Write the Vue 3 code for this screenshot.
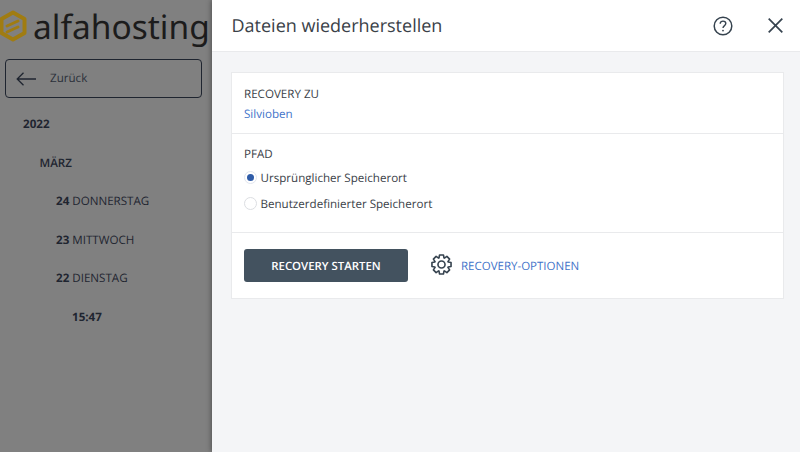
<script setup>
const tree = [
  { id: 'y', level: 0, bold: '2022', text: '' },
  { id: 'm', level: 1, bold: '', text: 'MÄRZ', medium: true },
  { id: 'd24', level: 2, bold: '24', text: 'DONNERSTAG' },
  { id: 'd23', level: 2, bold: '23', text: 'MITTWOCH' },
  { id: 'd22', level: 2, bold: '22', text: 'DIENSTAG' },
  { id: 't', level: 3, bold: '15:47', text: '' }
]

// eight blocky teeth around the centre
function gearPath() {
  const pts = []
  for (let i = 0; i < 8; i++) {
    const a = (i * Math.PI) / 4
    for (const [r, off] of [[7.4, -0.36], [10.2, -0.2], [10.2, 0.2], [7.4, 0.36]]) {
      const x = 11 + r * Math.sin(a + off)
      const y = 11 - r * Math.cos(a + off)
      pts.push(`${x.toFixed(2)} ${y.toFixed(2)}`)
    }
  }
  return `M${pts.join(' L')} Z`
}
const gear = gearPath()
</script>

<template>
  <div class="page">
    <aside class="side">
      <div class="logo">
        <svg class="logo-mark" viewBox="0 0 28 32" width="28" height="32">
          <path d="M13 2.5 L24.5 9 V23 L13 29.5 L1.5 23 V9 Z" fill="none" stroke="#a07c12" stroke-width="4" stroke-linejoin="round" />
          <path d="M7 16 L18 11 M7 22 L18 17" fill="none" stroke="#a07c12" stroke-width="3" stroke-linecap="round" />
        </svg>
        <span class="logo-text">alfahosting</span>
      </div>
      <button class="back">
        <svg viewBox="0 0 20 14" width="20" height="14">
          <path d="M20 7 H1.2 M7.5 0.7 L1.2 7 L7.5 13.3" fill="none" stroke="#1f2530" stroke-width="1.3" />
        </svg>
        <span>Zurück</span>
      </button>
      <ul class="tree">
        <li v-for="item in tree" :key="item.id" :class="['tree-row', `lv${item.level}`, { medium: item.medium }]">
          <b v-if="item.bold">{{ item.bold }}</b>
          <span v-if="item.text">{{ item.text }}</span>
        </li>
      </ul>
    </aside>

    <section class="panel">
      <header class="panel-head">
        <h1>Dateien wiederherstellen</h1>
        <svg class="help" viewBox="0 0 20 20" width="20" height="20">
          <circle cx="10" cy="10" r="8.8" fill="none" stroke="#36434f" stroke-width="1.5" />
          <path d="M7.2 7.8 C7.2 6 8.5 5.1 10 5.1 C11.6 5.1 12.8 6.1 12.8 7.6 C12.8 9.6 10 9.6 10 11.9" fill="none" stroke="#36434f" stroke-width="1.4" />
          <circle cx="10" cy="14.6" r="0.9" fill="#36434f" />
        </svg>
        <svg class="close" viewBox="0 0 15 15" width="15" height="15">
          <path d="M0.7 0.7 L14.3 14.3 M14.3 0.7 L0.7 14.3" fill="none" stroke="#36434f" stroke-width="1.7" />
        </svg>
      </header>

      <div class="panel-body">
        <div class="card">
          <div class="block block-target">
            <div class="label">RECOVERY ZU</div>
            <a class="link">Silvioben</a>
          </div>
          <div class="block block-path">
            <div class="label">PFAD</div>
            <label class="radio">
              <span class="dot on"></span>
              Ursprünglicher Speicherort
            </label>
            <label class="radio">
              <span class="dot"></span>
              Benutzerdefinierter Speicherort
            </label>
          </div>
          <div class="block block-actions">
            <button class="start">RECOVERY STARTEN</button>
            <svg class="gear" viewBox="0 0 22 22" width="21" height="21">
              <path :d="gear" fill="none" stroke="#36434f" stroke-width="1.7" stroke-linejoin="round" />
              <circle cx="11" cy="11" r="3.7" fill="none" stroke="#36434f" stroke-width="1.7" />
            </svg>
            <a class="link upper">RECOVERY-OPTIONEN</a>
          </div>
        </div>
      </div>
    </section>
  </div>
</template>

<style scoped>
.page {
  display: flex;
  width: 800px;
  height: 452px;
  overflow: hidden;
  font-family: "Open Sans", "Liberation Sans", sans-serif;
  color: #3a4148;
  text-rendering: geometricPrecision;
}

.side {
  width: 212px;
  flex: none;
  background: #808080;
  color: #1f2530;
}

.logo {
  display: flex;
  align-items: center;
  height: 52px;
  gap: 5px;
}

.logo-mark {
  flex: none;
}

.logo-text {
  font-family: "Noto Sans", sans-serif;
  font-size: 33.5px;
  line-height: 52px;
  color: #1c1c1c;
  white-space: nowrap;
}

.back {
  display: flex;
  align-items: center;
  gap: 14px;
  box-sizing: border-box;
  width: 197px;
  height: 39px;
  margin: 7px 0 0 5px;
  padding: 0 0 0 10px;
  background: transparent;
  border: 1.5px solid #1f2530;
  border-radius: 4px;
  font: 11.6px "Open Sans", sans-serif;
  text-rendering: geometricPrecision;
  color: #2b303a;
}

.tree {
  list-style: none;
  margin: 8px 0 0;
  padding: 0;
}

.tree-row {
  height: 38.6px;
  line-height: 38.6px;
  font-size: 11.6px;
  white-space: nowrap;
}

.tree-row b {
  font-weight: 700;
  margin-right: 3px;
}

.tree-row.medium {
  font-weight: 600;
}

.lv0 { padding-left: 23px; }
.lv1 { padding-left: 39.5px; }
.lv2 { padding-left: 56px; }
.lv3 { padding-left: 72px; }

.panel {
  flex: 1;
  display: flex;
  flex-direction: column;
  background: #f4f5f7;
  box-shadow: -1px 0 5px rgba(0, 0, 0, 0.35);
  position: relative;
}

.panel-head {
  display: flex;
  align-items: center;
  height: 52px;
  box-sizing: border-box;
  padding: 0 17px 0 19.5px;
  background: #fff;
  border-bottom: 1px solid #e9eaec;
}

.panel-head h1 {
  flex: 1;
  margin: 0;
  font-size: 18px;
  font-weight: 400;
  color: #3a4148;
}

.help {
  margin-right: 35px;
}

.panel-body {
  padding: 20px 16px 0 19px;
}

.card {
  background: #fff;
  border: 1px solid #e9eaec;
}

.block {
  padding: 0 12px;
}

.block + .block {
  border-top: 1px solid #e9eaec;
}

.block-target {
  height: 60px;
  padding-top: 12px;
  box-sizing: border-box;
}

.block-path {
  height: 99px;
  padding-top: 11px;
  box-sizing: border-box;
}

.block-actions {
  display: flex;
  align-items: center;
  height: 66px;
  box-sizing: border-box;
}

.label {
  font-size: 11.6px;
  line-height: 20px;
  color: #3a4148;
}

.link {
  font-size: 11.6px;
  line-height: 20px;
  color: #3f73c9;
}

.block-target .link {
  display: block;
}

.radio {
  display: flex;
  align-items: center;
  gap: 3.5px;
  height: 26px;
  font-size: 11.6px;
  color: #3a4148;
}

.dot {
  width: 13px;
  height: 13px;
  box-sizing: border-box;
  border-radius: 50%;
  border: 1px solid #dcdee2;
  background: #fff;
  margin-top: -2px;
  position: relative;
}

.dot.on {
  border-color: #e2e6ee;
}

.dot.on::after {
  content: "";
  position: absolute;
  left: 2px;
  top: 2px;
  width: 7px;
  height: 7px;
  border-radius: 50%;
  background: #2f5ca8;
}

.start {
  width: 164px;
  height: 33px;
  padding: 2px 0 0;
  background: #43525f;
  border: 0;
  border-radius: 3px;
  color: #fff;
  font: 600 11.4px "Open Sans", sans-serif;
  text-rendering: geometricPrecision;
}

.gear {
  margin-left: 22.5px;
  margin-top: -2px;
}

.upper {
  margin-left: 9.5px;
  margin-top: 2px;
  font-size: 11.5px;
}
</style>

<style>
body {
  margin: 0;
}
</style>
